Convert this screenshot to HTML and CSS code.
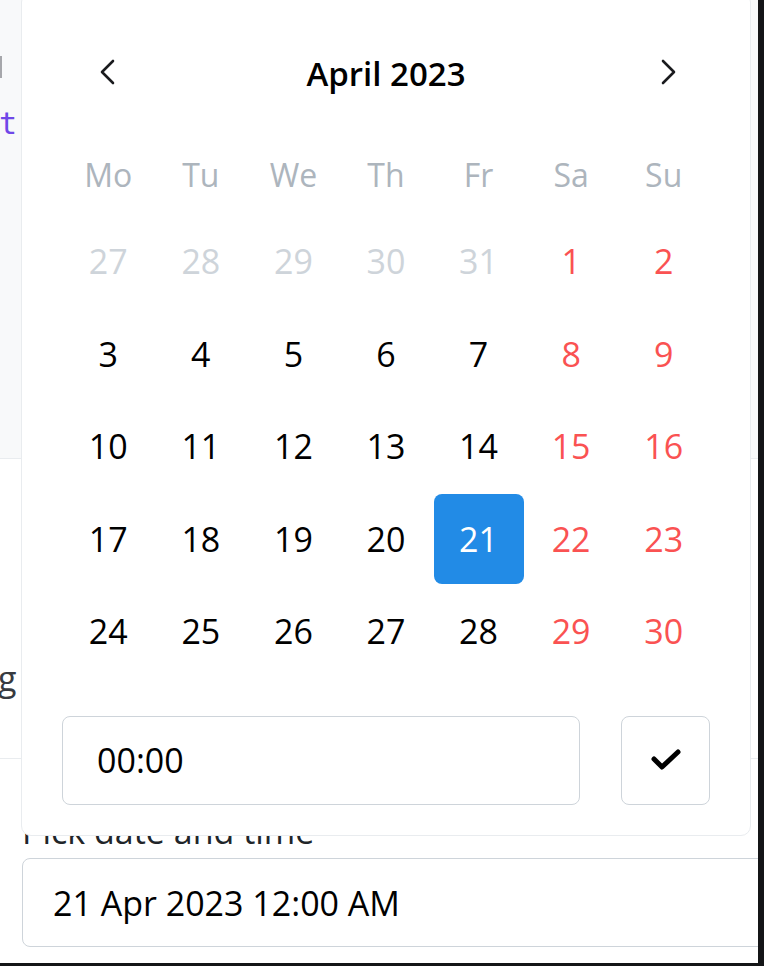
FILE: index.html
```html
<!DOCTYPE html>
<html lang="en">
<head>
<meta charset="utf-8">
<title>Date time picker</title>
<link rel="stylesheet" href="styles.css">
</head>
<body>
<div class="screen">
  <div class="page">
    <div class="code">
      <div class="code-tick"></div>
      <div class="code-line">t</div>
    </div>
    <div class="demo">
      <div class="demo-text">g</div>
    </div>
    <div class="field">
      <label class="field-label">Pick date and time</label>
      <div class="field-input">21 Apr 2023 12:00 AM</div>
    </div>

    <div class="dropdown">
      <div class="cal-header">
        <button class="cal-nav" aria-label="Previous month">
          <svg width="20" height="26" viewBox="0 0 20 26"><polyline points="15,2 4,13 15,24" fill="none" stroke="#1a1b1e" stroke-width="2.6" stroke-linecap="round" stroke-linejoin="round"/></svg>
        </button>
        <div class="cal-level">April 2023</div>
        <button class="cal-nav" aria-label="Next month">
          <svg width="20" height="26" viewBox="0 0 20 26"><polyline points="5,2 16,13 5,24" fill="none" stroke="#1a1b1e" stroke-width="2.6" stroke-linecap="round" stroke-linejoin="round"/></svg>
        </button>
      </div>
      <div class="weekdays">
        <span>Mo</span><span>Tu</span><span>We</span><span>Th</span><span>Fr</span><span>Sa</span><span>Su</span>
      </div>
      <div class="days">
        <button class="day outside">27</button><button class="day outside">28</button><button class="day outside">29</button><button class="day outside">30</button><button class="day outside">31</button><button class="day weekend">1</button><button class="day weekend">2</button>
        <button class="day">3</button><button class="day">4</button><button class="day">5</button><button class="day">6</button><button class="day">7</button><button class="day weekend">8</button><button class="day weekend">9</button>
        <button class="day">10</button><button class="day">11</button><button class="day">12</button><button class="day">13</button><button class="day">14</button><button class="day weekend">15</button><button class="day weekend">16</button>
        <button class="day">17</button><button class="day">18</button><button class="day">19</button><button class="day">20</button><button class="day selected">21</button><button class="day weekend">22</button><button class="day weekend">23</button>
        <button class="day">24</button><button class="day">25</button><button class="day">26</button><button class="day">27</button><button class="day">28</button><button class="day weekend">29</button><button class="day weekend">30</button>
      </div>
      <div class="time-row">
        <div class="time-input">00:00</div>
        <button class="confirm" aria-label="Confirm">
          <svg width="34" height="26" viewBox="0 0 34 26"><polyline points="5,12 13,20 29,5" fill="none" stroke="#000" stroke-width="5" stroke-linecap="round" stroke-linejoin="round"/></svg>
        </button>
      </div>
    </div>
  </div>
</div>
</body>
</html>
```

FILE: styles.css
```css
* { box-sizing: border-box; }

html, body {
  margin: 0;
  padding: 0;
}

body {
  width: 764px;
  height: 966px;
  overflow: hidden;
  background: #141517;
  font-family: "Open Sans", "Noto Sans", sans-serif;
  color: #000;
}

.screen {
  display: flex;
  height: 963px;
}

.page {
  position: relative;
  width: 758px;
  height: 963px;
  background: #fff;
  overflow: hidden;
}

/* background page content */
.code {
  height: 459px;
  background: #f8f9fa;
  border-bottom: 1px solid #e9ecef;
  padding-top: 56px;
}

.code-tick {
  width: 2px;
  height: 22px;
  background: #a6a7ab;
}

.code-line {
  margin-top: 28px;
  font-family: "DejaVu Sans Mono", "Liberation Mono", monospace;
  font-size: 30px;
  line-height: 36px;
  color: #7048e8;
  margin-left: -1px;
}

.demo {
  height: 300px;
  border-bottom: 1px solid #e9ecef;
  padding-top: 196px;
}

.demo-text {
  font-size: 34px;
  line-height: 46px;
  color: #373a40;
  margin-left: -2px;
}

.field {
  padding: 45px 0 0 22px;
}

.field-label {
  display: block;
  font-size: 34px;
  font-weight: 500;
  line-height: 54px;
  color: #212529;
}

.field-input {
  width: 760px;
  height: 89px;
  border: 1px solid #ced4da;
  border-radius: 8px;
  padding-left: 30px;
  display: flex;
  align-items: center;
  font-size: 34px;
  color: #000;
}

/* dropdown */
.dropdown {
  position: absolute;
  left: 21px;
  top: -8px;
  width: 730px;
  height: 844px;
  background: #fff;
  border: 1px solid #e9ecef;
  border-radius: 10px;
  padding: 34px 40px 0 40px;
}

.cal-header {
  display: flex;
  align-items: center;
  height: 90px;
}

.cal-nav {
  width: 90px;
  height: 90px;
  border: 0;
  background: transparent;
  padding: 0;
  display: flex;
  align-items: center;
  justify-content: center;
  cursor: pointer;
}

.cal-nav:first-child { justify-content: center; padding-left: 2px; }
.cal-nav:last-child { padding-left: 6px; }

.cal-level {
  flex: 1;
  text-align: center;
  font-size: 33px;
  font-weight: 600;
  color: #000;
  padding-top: 2px;
}

.weekdays {
  display: grid;
  grid-template-columns: repeat(7, 1fr);
  padding-top: 38px;
  padding-bottom: 20px;
  line-height: 40px;
}

.weekdays span {
  text-align: center;
  font-size: 32px;
  color: #adb5bd;
}

.days {
  display: grid;
  grid-template-columns: repeat(7, 1fr);
  grid-auto-rows: 92.5px;
  align-items: center;
  justify-items: center;
}

.day {
  width: 90px;
  height: 90px;
  border: 0;
  border-radius: 8px;
  background: transparent;
  font-family: inherit;
  font-size: 34px;
  color: #000;
  padding: 0;
  cursor: pointer;
}

.day.outside { color: #ced4da; }
.day.weekend { color: #fa5252; }
.day.selected {
  background: #228be6;
  color: #fff;
}

.time-row {
  display: flex;
  gap: 41px;
  margin-top: 38px;
}

.time-input {
  flex: 1;
  height: 89px;
  border: 1px solid #ced4da;
  border-radius: 8px;
  padding-left: 34px;
  display: flex;
  align-items: center;
  font-size: 34px;
  color: #000;
}

.confirm {
  width: 89px;
  height: 89px;
  border: 1px solid #ced4da;
  border-radius: 8px;
  background: #fff;
  display: flex;
  align-items: center;
  justify-content: center;
  padding: 0;
  cursor: pointer;
}
```
